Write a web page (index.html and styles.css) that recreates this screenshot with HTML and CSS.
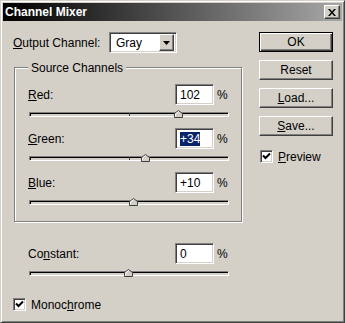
FILE: index.html
```html
<!DOCTYPE html>
<html lang="en">
  <head>
    <meta charset="UTF-8" />
    <title>Channel Mixer</title>
    <link rel="stylesheet" href="styles.css">
  </head>
  <body>
    <div class="window">
      <div class="titlebar">
        <span class="title">Channel Mixer</span>
        <span class="close">
          <svg width="8" height="7" viewBox="0 0 8 7">
            <path d="M0 0h2l2 2.5L6 0h2L5 3.5 8 7H6L4 4.5 2 7H0l3-3.5z" fill="#000" />
          </svg>
        </span>
      </div>

      <div class="body">
        <div class="main">
          <div class="output-row">
            <label class="output-label"><u>O</u>utput Channel:</label>
            <div class="select">
              <span class="select-value">Gray</span>
              <span class="select-drop">
                <svg width="7" height="4" viewBox="0 0 7 4"><path d="M0 0h7L3.5 4z" fill="#000" /></svg>
              </span>
            </div>
          </div>

          <div class="group">
            <span class="legend">Source Channels</span>

            <div class="channel">
              <div class="channel-head">
                <label class="channel-label"><u>R</u>ed:</label>
                <div class="field">102</div>
                <span class="pct">%</span>
              </div>
              <div class="slider">
                <span class="tick"></span>
                <span class="thumb" style="left: 75.5%"><svg width="9" height="8" viewBox="0 0 9 8"><path d="M0.5 7.5V3.5L4.5 0.5L8.5 3.5V7.5Z" fill="#d4d0c8" stroke="#404040" /><path d="M1.5 6.5V4L4.5 1.7" fill="none" stroke="#fff" /></svg></span>
              </div>
            </div>

            <div class="channel">
              <div class="channel-head">
                <label class="channel-label"><u>G</u>reen:</label>
                <div class="field"><span class="selected">+34</span></div>
                <span class="pct">%</span>
              </div>
              <div class="slider">
                <span class="tick"></span>
                <span class="thumb" style="left: 58.5%"><svg width="9" height="8" viewBox="0 0 9 8"><path d="M0.5 7.5V3.5L4.5 0.5L8.5 3.5V7.5Z" fill="#d4d0c8" stroke="#404040" /><path d="M1.5 6.5V4L4.5 1.7" fill="none" stroke="#fff" /></svg></span>
              </div>
            </div>

            <div class="channel">
              <div class="channel-head">
                <label class="channel-label"><u>B</u>lue:</label>
                <div class="field">+10</div>
                <span class="pct">%</span>
              </div>
              <div class="slider">
                <span class="tick"></span>
                <span class="thumb" style="left: 52.5%"><svg width="9" height="8" viewBox="0 0 9 8"><path d="M0.5 7.5V3.5L4.5 0.5L8.5 3.5V7.5Z" fill="#d4d0c8" stroke="#404040" /><path d="M1.5 6.5V4L4.5 1.7" fill="none" stroke="#fff" /></svg></span>
              </div>
            </div>
          </div>

          <div class="channel constant">
            <div class="channel-head">
              <label class="channel-label">Co<u>n</u>stant:</label>
              <div class="field">0</div>
              <span class="pct">%</span>
            </div>
            <div class="slider">
              <span class="tick"></span>
              <span class="thumb" style="left: 50%"><svg width="9" height="8" viewBox="0 0 9 8"><path d="M0.5 7.5V3.5L4.5 0.5L8.5 3.5V7.5Z" fill="#d4d0c8" stroke="#404040" /><path d="M1.5 6.5V4L4.5 1.7" fill="none" stroke="#fff" /></svg></span>
            </div>
          </div>

          <label class="check mono">
            <span class="box"><svg width="9" height="9" viewBox="0 0 9 9"><path d="M1 3.5l2.5 2.5L8 1.5" fill="none" stroke="#000" stroke-width="2" /></svg></span>
            Monoc<u>h</u>rome
          </label>
        </div>

        <div class="side">
          <div class="btn btn-default">OK</div>
          <div class="btn">Reset</div>
          <div class="btn btn-gap"><u>L</u>oad...</div>
          <div class="btn"><u>S</u>ave...</div>
          <label class="check preview">
            <span class="box"><svg width="9" height="9" viewBox="0 0 9 9"><path d="M1 3.5l2.5 2.5L8 1.5" fill="none" stroke="#000" stroke-width="2" /></svg></span>
            <span><u>P</u>review</span>
          </label>
        </div>
      </div>
    </div>
  </body>
</html>
```

FILE: styles.css
```css
html,
body {
  margin: 0;
  padding: 0;
  background: #d4d0c8;
  font-family: "Liberation Sans", Arial, sans-serif;
  font-size: 12px;
  color: #000;
}

.window {
  width: 345px;
  height: 323px;
  box-sizing: border-box;
  padding: 2px;
  background: #d4d0c8;
  border: 1px solid;
  border-color: #d4d0c8 #404040 #404040 #d4d0c8;
  box-shadow: inset 1px 1px #fff, inset -1px -1px #808080;
}

.titlebar {
  height: 18px;
  display: flex;
  align-items: center;
  justify-content: space-between;
  padding: 0 2px 0 2px;
  background: linear-gradient(to right, #000 0%, #202020 20%, #a8a8a8 100%);
}

.title {
  color: #fff;
  font-weight: bold;
  font-size: 12px;
}

.close {
  width: 16px;
  height: 14px;
  box-sizing: border-box;
  display: flex;
  align-items: center;
  justify-content: center;
  background: #d4d0c8;
  border: 1px solid;
  border-color: #fff #404040 #404040 #fff;
  box-shadow: inset -1px -1px #808080;
}

.body {
  display: flex;
  padding: 11px 0 0 10px;
}

.main {
  width: 229px;
}

.side {
  width: 74px;
  margin-left: 17px;
}

/* output channel row */

.output-row {
  display: flex;
  align-items: center;
  height: 21px;
}

.output-label {
  width: 96px;
}

.select {
  width: 68px;
  height: 21px;
  box-sizing: border-box;
  display: flex;
  align-items: center;
  justify-content: space-between;
  background: #fff;
  border: 1px solid;
  border-color: #808080 #fff #fff #808080;
  box-shadow: inset 1px 1px #404040, inset -1px -1px #d4d0c8;
  padding: 2px 2px 2px 6px;
}

.select-drop {
  width: 15px;
  height: 17px;
  box-sizing: border-box;
  display: flex;
  align-items: center;
  justify-content: center;
  background: #d4d0c8;
  border: 1px solid;
  border-color: #fff #404040 #404040 #fff;
  box-shadow: inset -1px -1px #808080;
}

/* group box */

.group {
  position: relative;
  margin: 14px 0 0 1px;
  padding: 16px 12px 16px 13px;
  border: 1px solid #808080;
  box-shadow: inset 1px 1px #fff, 1px 1px #fff;
}

.legend {
  position: absolute;
  top: -7px;
  left: 13px;
  padding: 0 3px;
  line-height: 14px;
  background: #d4d0c8;
}

.channel {
  margin-bottom: 11px;
}

.group .channel:last-child {
  margin-bottom: 0;
}

.channel-head {
  display: flex;
  align-items: center;
  height: 21px;
}

.channel-label {
  flex: 1;
}

.field {
  width: 39px;
  height: 21px;
  box-sizing: border-box;
  display: flex;
  align-items: center;
  padding-left: 4px;
  background: #fff;
  border: 1px solid;
  border-color: #808080 #fff #fff #808080;
  box-shadow: inset 1px 1px #404040, inset -1px -1px #d4d0c8;
}

.selected {
  background: #0a246a;
  color: #fff;
}

.pct {
  width: 12px;
  margin-left: 3px;
}

.slider {
  position: relative;
  margin: 7px 0 0 1px;
  width: 200px;
  height: 5px;
  box-sizing: border-box;
  background: #d4d0c8;
  border: 1px solid;
  border-color: #808080 #fff #fff #808080;
  box-shadow: inset 1px 1px #000;
}

.tick {
  position: absolute;
  left: 50%;
  top: 0;
  width: 1px;
  height: 3px;
  background: #404040;
}

.thumb {
  position: absolute;
  top: -3px;
  width: 9px;
  height: 8px;
  margin-left: -5px;
  display: block;
  line-height: 0;
}

.constant {
  width: 201px;
  margin: 21px 0 0 15px;
}

/* checkboxes */

.check {
  display: flex;
  align-items: center;
  height: 13px;
}

.box {
  width: 13px;
  height: 13px;
  box-sizing: border-box;
  display: flex;
  align-items: center;
  justify-content: center;
  margin-right: 5px;
  background: #fff;
  border: 1px solid;
  border-color: #808080 #fff #fff #808080;
  box-shadow: inset 1px 1px #404040, inset -1px -1px #d4d0c8;
}

.mono {
  margin-top: 22px;
}

.preview {
  margin: 14px 0 0 1px;
}

/* buttons */

.btn {
  height: 20px;
  box-sizing: border-box;
  display: flex;
  align-items: center;
  justify-content: center;
  margin-bottom: 8px;
  background: #d4d0c8;
  border: 1px solid;
  border-color: #fff #404040 #404040 #fff;
  box-shadow: inset -1px -1px #808080;
}

.btn-default {
  border-color: #000;
  box-shadow: inset 1px 1px #fff, inset -1px -1px #404040, inset -2px -2px #808080;
}

.btn-gap {
  margin-top: 7px;
}
```
